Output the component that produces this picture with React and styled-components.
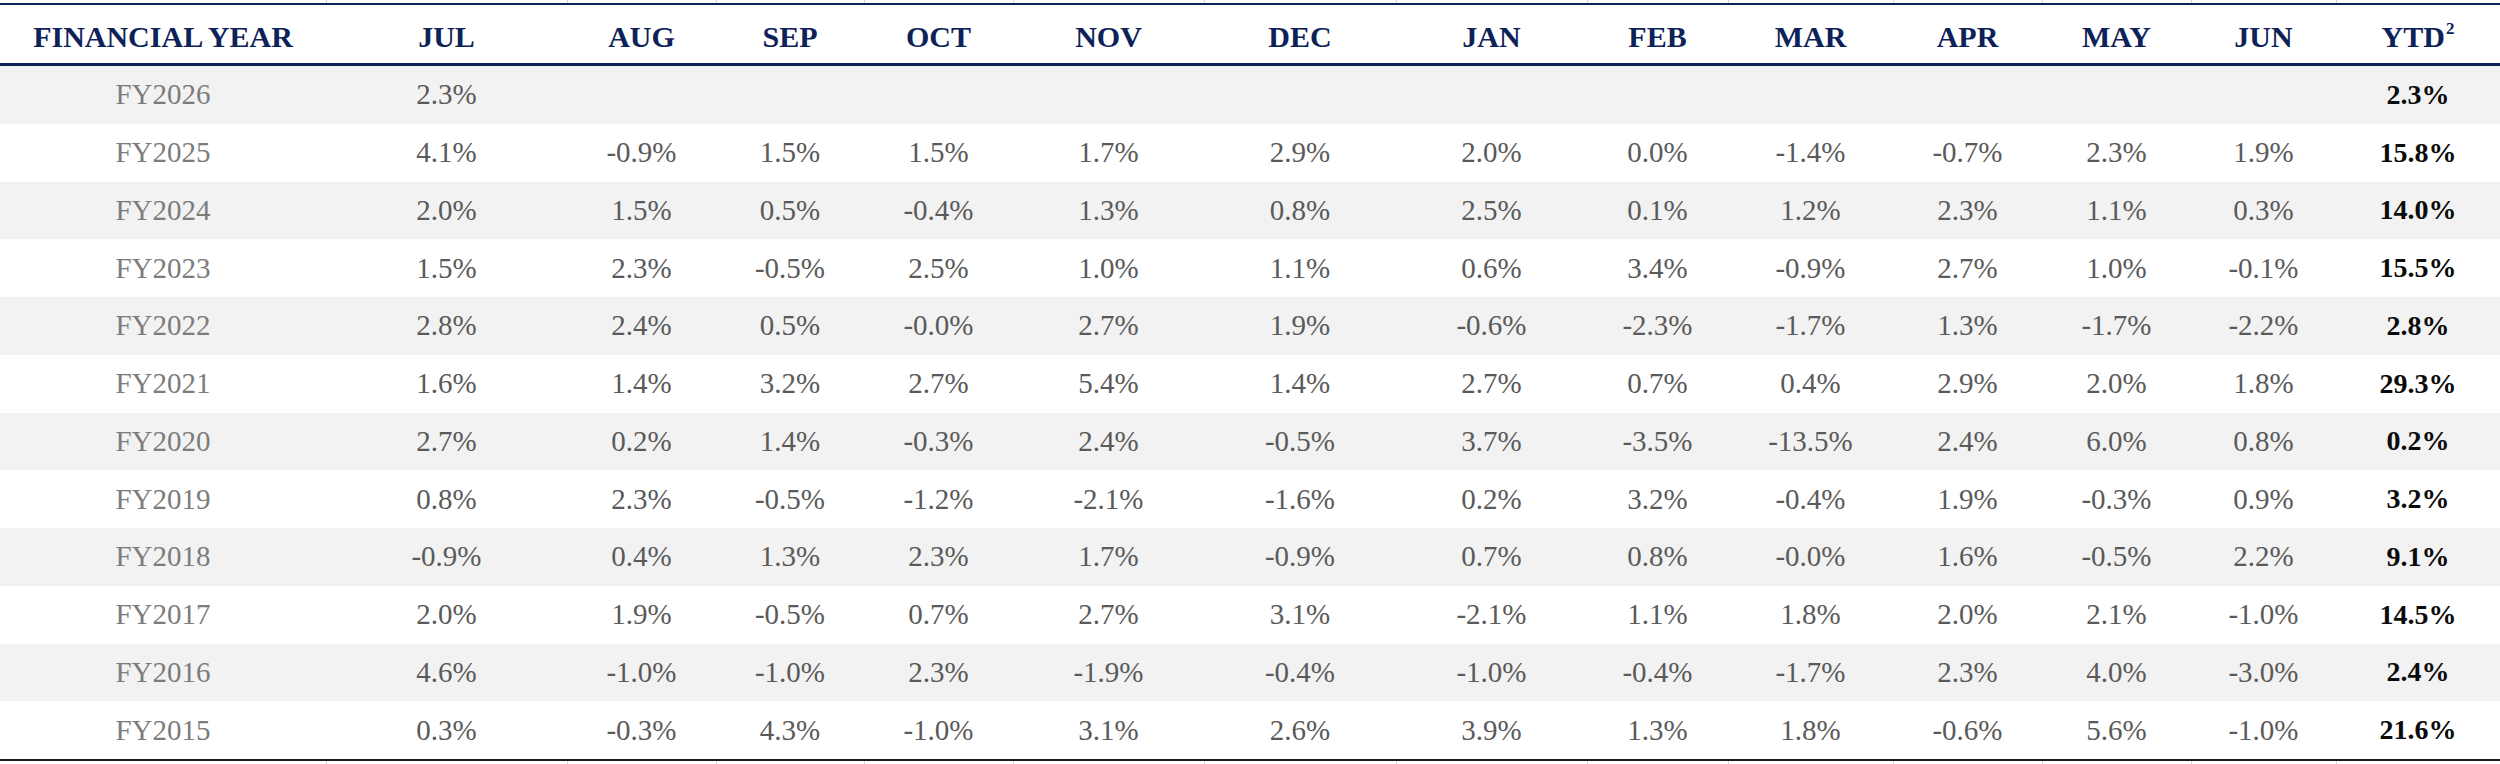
import React from 'react'
import styled, { createGlobalStyle } from 'styled-components'

const GlobalStyle = createGlobalStyle`
  html, body {
    margin: 0;
    padding: 0;
    background: #ffffff;
  }
  body {
    font-family: 'Liberation Serif', 'Times New Roman', serif;
  }
`

const COLUMNS = '326px 241px 149px 148px 149px 191px 192px 191px 141px 165px 149px 149px 145px 164px'
const NAVY = '#0d2258'

const MONTHS = ['JUL', 'AUG', 'SEP', 'OCT', 'NOV', 'DEC', 'JAN', 'FEB', 'MAR', 'APR', 'MAY', 'JUN']

const ROWS = [
  ['FY2026', ['2.3', '', '', '', '', '', '', '', '', '', '', ''], '2.3'],
  ['FY2025', ['4.1', '-0.9', '1.5', '1.5', '1.7', '2.9', '2.0', '0.0', '-1.4', '-0.7', '2.3', '1.9'], '15.8'],
  ['FY2024', ['2.0', '1.5', '0.5', '-0.4', '1.3', '0.8', '2.5', '0.1', '1.2', '2.3', '1.1', '0.3'], '14.0'],
  ['FY2023', ['1.5', '2.3', '-0.5', '2.5', '1.0', '1.1', '0.6', '3.4', '-0.9', '2.7', '1.0', '-0.1'], '15.5'],
  ['FY2022', ['2.8', '2.4', '0.5', '-0.0', '2.7', '1.9', '-0.6', '-2.3', '-1.7', '1.3', '-1.7', '-2.2'], '2.8'],
  ['FY2021', ['1.6', '1.4', '3.2', '2.7', '5.4', '1.4', '2.7', '0.7', '0.4', '2.9', '2.0', '1.8'], '29.3'],
  ['FY2020', ['2.7', '0.2', '1.4', '-0.3', '2.4', '-0.5', '3.7', '-3.5', '-13.5', '2.4', '6.0', '0.8'], '0.2'],
  ['FY2019', ['0.8', '2.3', '-0.5', '-1.2', '-2.1', '-1.6', '0.2', '3.2', '-0.4', '1.9', '-0.3', '0.9'], '3.2'],
  ['FY2018', ['-0.9', '0.4', '1.3', '2.3', '1.7', '-0.9', '0.7', '0.8', '-0.0', '1.6', '-0.5', '2.2'], '9.1'],
  ['FY2017', ['2.0', '1.9', '-0.5', '0.7', '2.7', '3.1', '-2.1', '1.1', '1.8', '2.0', '2.1', '-1.0'], '14.5'],
  ['FY2016', ['4.6', '-1.0', '-1.0', '2.3', '-1.9', '-0.4', '-1.0', '-0.4', '-1.7', '2.3', '4.0', '-3.0'], '2.4'],
  ['FY2015', ['0.3', '-0.3', '4.3', '-1.0', '3.1', '2.6', '3.9', '1.3', '1.8', '-0.6', '5.6', '-1.0'], '21.6']
]

const Page = styled.div`
  width: 2500px;
  display: flex;
  flex-direction: column;
`

const Stubs = styled.div`
  display: grid;
  grid-template-columns: ${COLUMNS};
  height: 3px;
`

const Stub = styled.div`
  border-left: ${props => (props.first ? 'none' : '1px solid #d4d4d4')};
`

const Table = styled.div`
  border-top: 2px solid ${NAVY};
  border-bottom: 2px solid #1a1a1a;
`

const HeaderRow = styled.div`
  display: grid;
  grid-template-columns: ${COLUMNS};
  height: 58px;
  border-bottom: 3px solid ${NAVY};
  align-items: center;
`

const HeadCell = styled.div`
  text-align: center;
  color: ${NAVY};
  font-weight: 700;
  font-size: 30px;
  line-height: 1;
  padding-top: 5px;

  sup {
    font-size: 17px;
    line-height: 0;
    position: relative;
    top: -2px;
    margin-left: 1px;
  }
`

const Row = styled.div`
  display: grid;
  grid-template-columns: ${COLUMNS};
  height: 57.75px;
  align-items: center;
  background: ${props => (props.striped ? '#f2f2f2' : '#ffffff')};
`

const Cell = styled.div`
  text-align: center;
  font-size: 29px;
  line-height: 1;
  color: ${props => (props.label ? '#7c7c7c' : '#5a5a5a')};
  font-weight: ${props => (props.bold ? 700 : 400)};
  ${props => props.bold && 'color: #0a0a0a; font-size: 28px;'}
`

const App = () => {
  return (
    <Page>
      <GlobalStyle />
      <Stubs>
        {Array.from({ length: 14 }).map((_, i) => (
          <Stub key={i} first={i === 0} />
        ))}
      </Stubs>
      <Table>
        <HeaderRow>
          <HeadCell>FINANCIAL YEAR</HeadCell>
          {MONTHS.map(m => (
            <HeadCell key={m}>{m}</HeadCell>
          ))}
          <HeadCell>
            YTD<sup>2</sup>
          </HeadCell>
        </HeaderRow>
        {ROWS.map(([year, values, ytd], i) => (
          <Row key={year} striped={i % 2 === 0}>
            <Cell label>{year}</Cell>
            {values.map((v, j) => (
              <Cell key={j}>{v === '' ? '' : `${v}%`}</Cell>
            ))}
            <Cell bold>{`${ytd}%`}</Cell>
          </Row>
        ))}
      </Table>
      <Stubs>
        {Array.from({ length: 14 }).map((_, i) => (
          <Stub key={i} first={i === 0} />
        ))}
      </Stubs>
    </Page>
  )
}

export default App
